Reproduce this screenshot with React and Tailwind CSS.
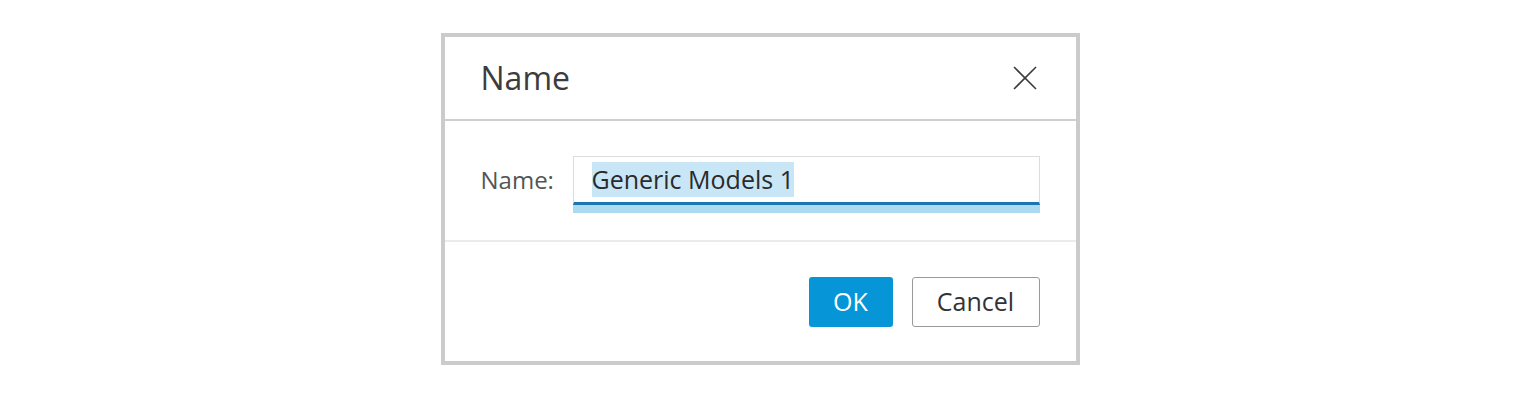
export default function App() {
  return (
    <div className="flex h-[397px] w-full items-center justify-center bg-white font-['Open_Sans',sans-serif]">
      <div className="w-[639px] border-4 border-[#cbcbcb] bg-white">
        {/* Header */}
        <div className="flex h-[84px] items-center justify-between border-b-2 border-[#cfcfcf] pl-9 pr-[38px]">
          <h1 className="text-[32px] leading-none text-[#3c3c3c]">Name</h1>
          <button className="flex h-[26px] w-[26px] items-center justify-center text-[#3c3c3c]">
            <svg width="26" height="24" viewBox="0 0 26 24" fill="none" stroke="currentColor" strokeWidth="1.6">
              <line x1="2" y1="1" x2="24" y2="23" />
              <line x1="24" y1="1" x2="2" y2="23" />
            </svg>
          </button>
        </div>

        {/* Body */}
        <div className="flex items-start border-b-2 border-[#ebebeb] pb-[35px] pl-9 pr-9 pt-[35px]">
          <label className="mt-[10px] w-[92px] text-[24px] leading-[28px] text-[#555]">Name:</label>
          <div className="flex h-[49px] flex-1 items-center border border-b-0 border-[#dcdcdc] border-b-[#1b75b0] pl-[18px] shadow-[0_8px_0_#acdbf1]" style={{ borderBottomWidth: 3 }}>
            <span className="bg-[#c9e6f6] text-[25px] leading-[35px] text-[#2a2a2a]">Generic Models 1</span>
          </div>
        </div>

        {/* Footer */}
        <div className="flex justify-end gap-[19px] pb-[34px] pl-9 pr-9 pt-[35px]">
          <button className="h-[50px] w-[84px] rounded-[3px] bg-[#0696d7] text-[25px] text-white">OK</button>
          <button className="h-[50px] w-[128px] rounded-[3px] border border-[#9a9a9a] bg-white text-[25px] text-[#333]">Cancel</button>
        </div>
      </div>
    </div>
  );
}
